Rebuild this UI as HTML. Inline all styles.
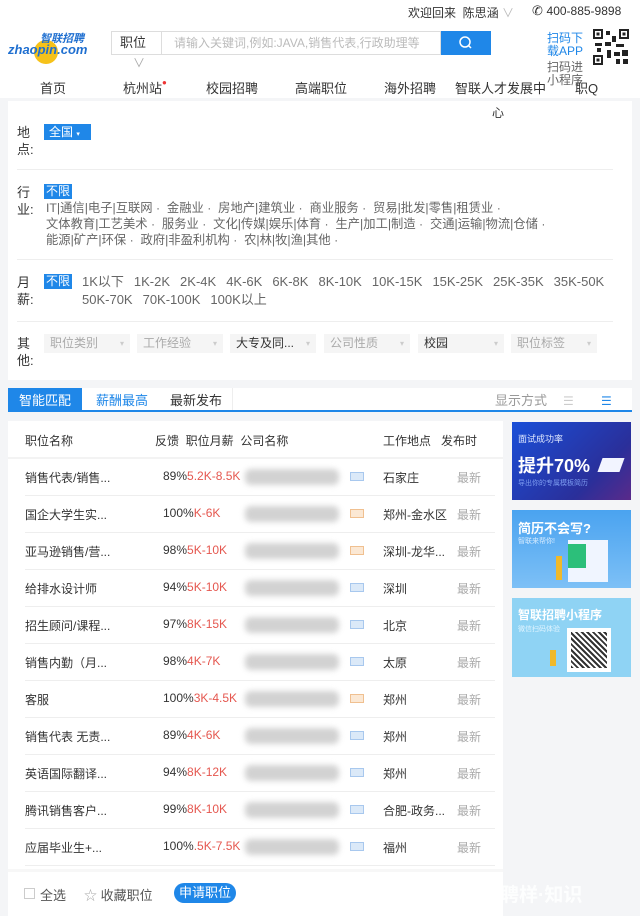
<!DOCTYPE html>
<html><head><meta charset="utf-8"><style>
*{margin:0;padding:0;box-sizing:border-box}
body{width:640px;height:916px;overflow:hidden;background:#f4f5f7;font-family:"Liberation Sans","Noto Sans CJK SC",sans-serif;font-size:12px;color:#333;position:relative}
.a{position:absolute;white-space:nowrap}
.blue{color:#1f87e8}
.tag{background:#1f87e8;color:#fff;padding:0 2px}
.g{color:#666}
.sep{position:absolute;left:17px;width:596px;height:1px;background:#eee}
.dd{position:absolute;top:334px;height:19px;width:86px;background:#f5f5f5;color:#aaa;font-size:12px;line-height:19px;padding-left:6px}
.dd:after{content:"▾";position:absolute;right:6px;color:#ccc;font-size:8px}
.row{position:absolute;left:8px;width:495px;height:37px}
.row span{position:absolute;top:10px;white-space:nowrap;font-size:12px}
.row .ln{position:absolute;left:17px;right:8px;bottom:0;height:1px;background:#eee}
.blur{position:absolute;top:10px;left:237px;width:94px;height:16px;background:#d2d2d2;filter:blur(3px);border-radius:6px}
.mini{position:absolute;top:13px;left:342px;width:14px;height:9px;background:#dbe9f8;border:1px solid #a8c8ee}
.sal span{display:inline-block;margin-right:10px}
</style></head><body>
<div style="position:absolute;left:0;top:0;width:640px;height:98px;background:#fff"></div>
<div class="a" style="left:408px;top:4px;font-size:12px">欢迎回来 &nbsp;陈思涵 <span style="color:#bbb">∨</span></div>
<div class="a" style="left:532px;top:3px;font-size:13px">✆ <span style="font-size:12px">400-885-9898</span></div>
<div class="a" style="left:8px;top:32px;width:78px;height:32px">
<div style="position:absolute;left:26px;top:8px;width:24px;height:24px;border-radius:50%;background:#f6c21a"></div>
<div class="a" style="left:32px;top:-2px;font-size:11px;font-weight:bold;color:#1f6fd0;font-style:italic">智联招聘</div>
<div class="a" style="left:0;top:10px;font-size:13px;font-weight:bold;color:#1f6fd0;font-style:italic">zhaopin.com</div></div>
<div class="a" style="left:111px;top:31px;width:51px;height:24px;border:1px solid #ddd;line-height:22px;padding-left:8px;font-size:13px">职位</div>
<div class="a" style="left:161px;top:31px;width:280px;height:24px;border:1px solid #ddd;border-left:none;line-height:22px;padding-left:13px;color:#bbb;font-size:12px">请输入关键词,例如:JAVA,销售代表,行政助理等</div>
<div class="a" style="left:441px;top:31px;width:50px;height:24px;background:#1f87e8"><svg width="50" height="24"><circle cx="24" cy="11" r="5" fill="none" stroke="#fff" stroke-width="1.5"/><line x1="27.5" y1="14.5" x2="30" y2="17" stroke="#fff" stroke-width="1.5"/></svg></div>
<div class="a" style="left:133px;top:54px;color:#aaa;font-size:12px">∨</div>
<div class="a blue" style="left:547px;top:32px;line-height:13px;font-size:12px">扫码下<br>载APP</div>
<div class="a" style="left:547px;top:61px;line-height:13px;color:#666;font-size:12px">扫码进<br>小程序</div>
<svg class="a" style="left:592px;top:28px" width="38" height="38"><rect width="38" height="38" fill="#fff"/><g fill="#222"><rect x="1" y="1" width="10" height="10"/><rect x="27" y="1" width="10" height="10"/><rect x="1" y="27" width="10" height="10"/><rect x="14" y="3" width="4" height="4"/><rect x="20" y="8" width="4" height="6"/><rect x="13" y="14" width="6" height="4"/><rect x="24" y="16" width="8" height="3"/><rect x="15" y="22" width="4" height="8"/><rect x="22" y="24" width="6" height="4"/><rect x="30" y="22" width="6" height="6"/><rect x="24" y="31" width="4" height="5"/><rect x="31" y="31" width="5" height="5"/><rect x="3" y="15" width="7" height="3"/><rect x="5" y="20" width="4" height="4"/></g><g fill="#fff"><rect x="3" y="3" width="6" height="6"/><rect x="29" y="3" width="6" height="6"/><rect x="3" y="29" width="6" height="6"/></g><g fill="#222"><rect x="4.5" y="4.5" width="3" height="3"/><rect x="30.5" y="4.5" width="3" height="3"/><rect x="4.5" y="30.5" width="3" height="3"/></g></svg>
<div class="a" style="left:40px;top:78px;font-size:13px">首页</div>
<div class="a" style="left:123px;top:78px;font-size:13px">杭州站<span style="color:#e33;font-size:8px;vertical-align:top">●</span></div>
<div class="a" style="left:206px;top:78px;font-size:13px">校园招聘</div>
<div class="a" style="left:295px;top:78px;font-size:13px">高端职位</div>
<div class="a" style="left:384px;top:78px;font-size:13px">海外招聘</div>
<div class="a" style="left:455px;top:78px;font-size:13px">智联人才发展中</div>
<div class="a" style="left:575px;top:78px;font-size:13px">职Q</div>

<div class="a" style="left:8px;top:101px;width:624px;height:279px;background:#fff"></div>
<div class="a" style="left:492px;top:104px;font-size:12px">心</div>
<div class="a" style="left:17px;top:124px;line-height:17px;font-size:13px">地<br>点:</div>
<div class="a tag" style="left:44px;top:124px;width:47px;height:16px;line-height:16px;font-size:12px;padding-left:5px">全国 <span style="font-size:7px">▾</span></div>
<div class="sep" style="top:169px"></div>
<div class="a" style="left:17px;top:184px;line-height:17px;font-size:13px">行<br>业:</div>
<div class="a tag" style="left:44px;top:184px;height:15px;line-height:15px">不限</div>
<div class="a g" style="left:46px;top:200px;line-height:16px;font-size:12.3px">IT|通信|电子|互联网 · &nbsp;金融业 · &nbsp;房地产|建筑业 · &nbsp;商业服务 · &nbsp;贸易|批发|零售|租赁业 ·<br>文体教育|工艺美术 · &nbsp;服务业 · &nbsp;文化|传媒|娱乐|体育 · &nbsp;生产|加工|制造 · &nbsp;交通|运输|物流|仓储 ·<br>能源|矿产|环保 · &nbsp;政府|非盈利机构 · &nbsp;农|林|牧|渔|其他 ·</div>
<div class="sep" style="top:259px"></div>
<div class="a" style="left:17px;top:274px;line-height:17px;font-size:13px">月<br>薪:</div>
<div class="a tag" style="left:44px;top:274px;height:15px;line-height:15px">不限</div>
<div class="a g sal" style="left:82px;top:273px;line-height:18px;font-size:13px"><span>1K以下</span><span>1K-2K</span><span>2K-4K</span><span>4K-6K</span><span>6K-8K</span><span>8K-10K</span><span>10K-15K</span><span>15K-25K</span><span>25K-35K</span><span>35K-50K</span><br><span>50K-70K</span><span>70K-100K</span><span>100K以上</span></div>
<div class="sep" style="top:321px"></div>
<div class="a" style="left:17px;top:335px;line-height:17px;font-size:13px">其<br>他:</div>
<div class="dd" style="left:44px">职位类别</div>
<div class="dd" style="left:137px">工作经验</div>
<div class="dd" style="left:230px;color:#333">大专及同...</div>
<div class="dd" style="left:324px">公司性质</div>
<div class="dd" style="left:418px;color:#333">校园</div>
<div class="dd" style="left:511px">职位标签</div>

<div class="a" style="left:8px;top:388px;width:624px;height:24px;background:#fff;border-bottom:2px solid #1f87e8"></div>
<div class="a" style="left:8px;top:388px;width:74px;height:24px;background:#1f87e8;color:#fff;line-height:26px;text-align:center;font-size:13px">智能匹配</div>
<div class="a blue" style="left:96px;top:388px;line-height:26px;font-size:13px">薪酬最高</div>
<div class="a" style="left:170px;top:388px;line-height:26px;font-size:13px">最新发布</div>
<div class="a" style="left:232px;top:388px;width:1px;height:22px;background:#eee"></div>
<div class="a" style="left:495px;top:388px;line-height:26px;color:#999;font-size:13px">显示方式</div>
<div class="a" style="left:563px;top:388px;line-height:26px;color:#ccc">☰</div>
<div class="a blue" style="left:601px;top:388px;line-height:26px">☰</div>

<div class="a" style="left:8px;top:421px;width:495px;height:495px;background:#fff"></div>
<div class="a" style="left:25px;top:432px;font-size:12px">职位名称</div>
<div class="a" style="left:155px;top:432px;font-size:12px">反馈 &nbsp;职位月薪 &nbsp;公司名称</div>
<div class="a" style="left:383px;top:432px;font-size:12px">工作地点 &nbsp;&nbsp;发布时</div>
<div class="a" style="left:8px;top:457px;width:495px;height:2px;background:#f3f3f3"></div>

<div class="row" style="top:459px"><span style="left:17px">销售代表/销售...</span><span style="left:155px">89%<b style="font-weight:normal;color:#e5574f">5.2K-8.5K</b></span><div class="blur"></div><div class="mini"></div><span style="left:375px">石家庄</span><span style="left:449px;color:#aaa">最新</span><div class="ln"></div></div>
<div class="row" style="top:496px"><span style="left:17px">国企大学生实...</span><span style="left:155px">100%<b style="font-weight:normal;color:#e5574f">K-6K</b></span><div class="blur"></div><div class="mini" style="background:#fbe8d4;border-color:#f0c090"></div><span style="left:375px">郑州-金水区</span><span style="left:449px;color:#aaa">最新</span><div class="ln"></div></div>
<div class="row" style="top:533px"><span style="left:17px">亚马逊销售/营...</span><span style="left:155px">98%<b style="font-weight:normal;color:#e5574f">5K-10K</b></span><div class="blur"></div><div class="mini" style="background:#fbe8d4;border-color:#f0c090"></div><span style="left:375px">深圳-龙华...</span><span style="left:449px;color:#aaa">最新</span><div class="ln"></div></div>
<div class="row" style="top:570px"><span style="left:17px">给排水设计师</span><span style="left:155px">94%<b style="font-weight:normal;color:#e5574f">5K-10K</b></span><div class="blur"></div><div class="mini"></div><span style="left:375px">深圳</span><span style="left:449px;color:#aaa">最新</span><div class="ln"></div></div>
<div class="row" style="top:607px"><span style="left:17px">招生顾问/课程...</span><span style="left:155px">97%<b style="font-weight:normal;color:#e5574f">8K-15K</b></span><div class="blur"></div><div class="mini"></div><span style="left:375px">北京</span><span style="left:449px;color:#aaa">最新</span><div class="ln"></div></div>
<div class="row" style="top:644px"><span style="left:17px">销售内勤（月...</span><span style="left:155px">98%<b style="font-weight:normal;color:#e5574f">4K-7K</b></span><div class="blur"></div><div class="mini"></div><span style="left:375px">太原</span><span style="left:449px;color:#aaa">最新</span><div class="ln"></div></div>
<div class="row" style="top:681px"><span style="left:17px">客服</span><span style="left:155px">100%<b style="font-weight:normal;color:#e5574f">3K-4.5K</b></span><div class="blur"></div><div class="mini" style="background:#fbe8d4;border-color:#f0c090"></div><span style="left:375px">郑州</span><span style="left:449px;color:#aaa">最新</span><div class="ln"></div></div>
<div class="row" style="top:718px"><span style="left:17px">销售代表 无责...</span><span style="left:155px">89%<b style="font-weight:normal;color:#e5574f">4K-6K</b></span><div class="blur"></div><div class="mini"></div><span style="left:375px">郑州</span><span style="left:449px;color:#aaa">最新</span><div class="ln"></div></div>
<div class="row" style="top:755px"><span style="left:17px">英语国际翻译...</span><span style="left:155px">94%<b style="font-weight:normal;color:#e5574f">8K-12K</b></span><div class="blur"></div><div class="mini"></div><span style="left:375px">郑州</span><span style="left:449px;color:#aaa">最新</span><div class="ln"></div></div>
<div class="row" style="top:792px"><span style="left:17px">腾讯销售客户...</span><span style="left:155px">99%<b style="font-weight:normal;color:#e5574f">8K-10K</b></span><div class="blur"></div><div class="mini"></div><span style="left:375px">合肥-政务...</span><span style="left:449px;color:#aaa">最新</span><div class="ln"></div></div>
<div class="row" style="top:829px"><span style="left:17px">应届毕业生+...</span><span style="left:155px">100%<b style="font-weight:normal;color:#e5574f">.5K-7.5K</b></span><div class="blur"></div><div class="mini"></div><span style="left:375px">福州</span><span style="left:449px;color:#aaa">最新</span><div class="ln"></div></div>

<div class="a" style="left:8px;top:869px;width:495px;height:3px;background:#f7f7f7"></div>
<div class="a" style="left:24px;top:888px;width:11px;height:11px;border:1px solid #ccc"></div>
<div class="a" style="left:40px;top:885px;color:#555;font-size:13px">全选</div>
<div class="a" style="left:84px;top:885px;color:#555;font-size:13px"><span style="color:#aaa">☆</span> 收藏职位</div>
<div class="a" style="left:174px;top:883px;width:62px;height:20px;border-radius:10px;background:#1f87e8;color:#fff;text-align:center;line-height:20px;font-size:13px">申请职位</div>
<div class="a" style="left:500px;top:880px;color:#fff;font-size:19px;font-weight:bold;opacity:.9">聘样·知识</div>

<div class="a" style="left:512px;top:422px;width:119px;height:78px;background:linear-gradient(135deg,#1a4fd8,#2a2f9a 70%,#5a2a8a);overflow:hidden">
<div class="a" style="left:6px;top:10px;color:#dfe8ff;font-size:9px">面试成功率</div>
<div class="a" style="left:6px;top:30px;color:#fff;font-size:18px;font-weight:bold">提升70%</div>
<div class="a" style="left:6px;top:56px;color:#7d9cf0;font-size:7px">导出你的专属模板简历</div>
<div class="a" style="left:88px;top:36px;width:22px;height:14px;background:#f2f4ff;transform:skew(-20deg)"></div></div>
<div class="a" style="left:512px;top:510px;width:119px;height:78px;background:linear-gradient(180deg,#4aa3f0,#7dc0f6);overflow:hidden">
<div class="a" style="left:6px;top:8px;color:#fff;font-size:13px;font-weight:bold">简历不会写?</div>
<div class="a" style="left:6px;top:26px;color:#d8ecff;font-size:7px">智联来帮你!</div>
<div class="a" style="left:56px;top:30px;width:40px;height:42px;background:#f0f5ff"></div>
<div class="a" style="left:56px;top:34px;width:18px;height:24px;background:#2cbf7a"></div>
<div class="a" style="left:44px;top:46px;width:6px;height:24px;background:#f0b92a"></div></div>
<div class="a" style="left:512px;top:598px;width:119px;height:79px;background:#8fd3f4;overflow:hidden">
<div class="a" style="left:6px;top:8px;color:#fff;font-size:12px;font-weight:bold">智联招聘小程序</div>
<div class="a" style="left:6px;top:26px;color:#e0f4ff;font-size:7px">微信扫码体验</div>
<div class="a" style="left:55px;top:30px;width:44px;height:44px;background:#fff;padding:4px"><div style="width:36px;height:36px;background:repeating-linear-gradient(45deg,#333 0 2px,#fff 2px 4px)"></div></div>
<div class="a" style="left:38px;top:52px;width:6px;height:16px;background:#f0b92a"></div></div>
</body></html>
